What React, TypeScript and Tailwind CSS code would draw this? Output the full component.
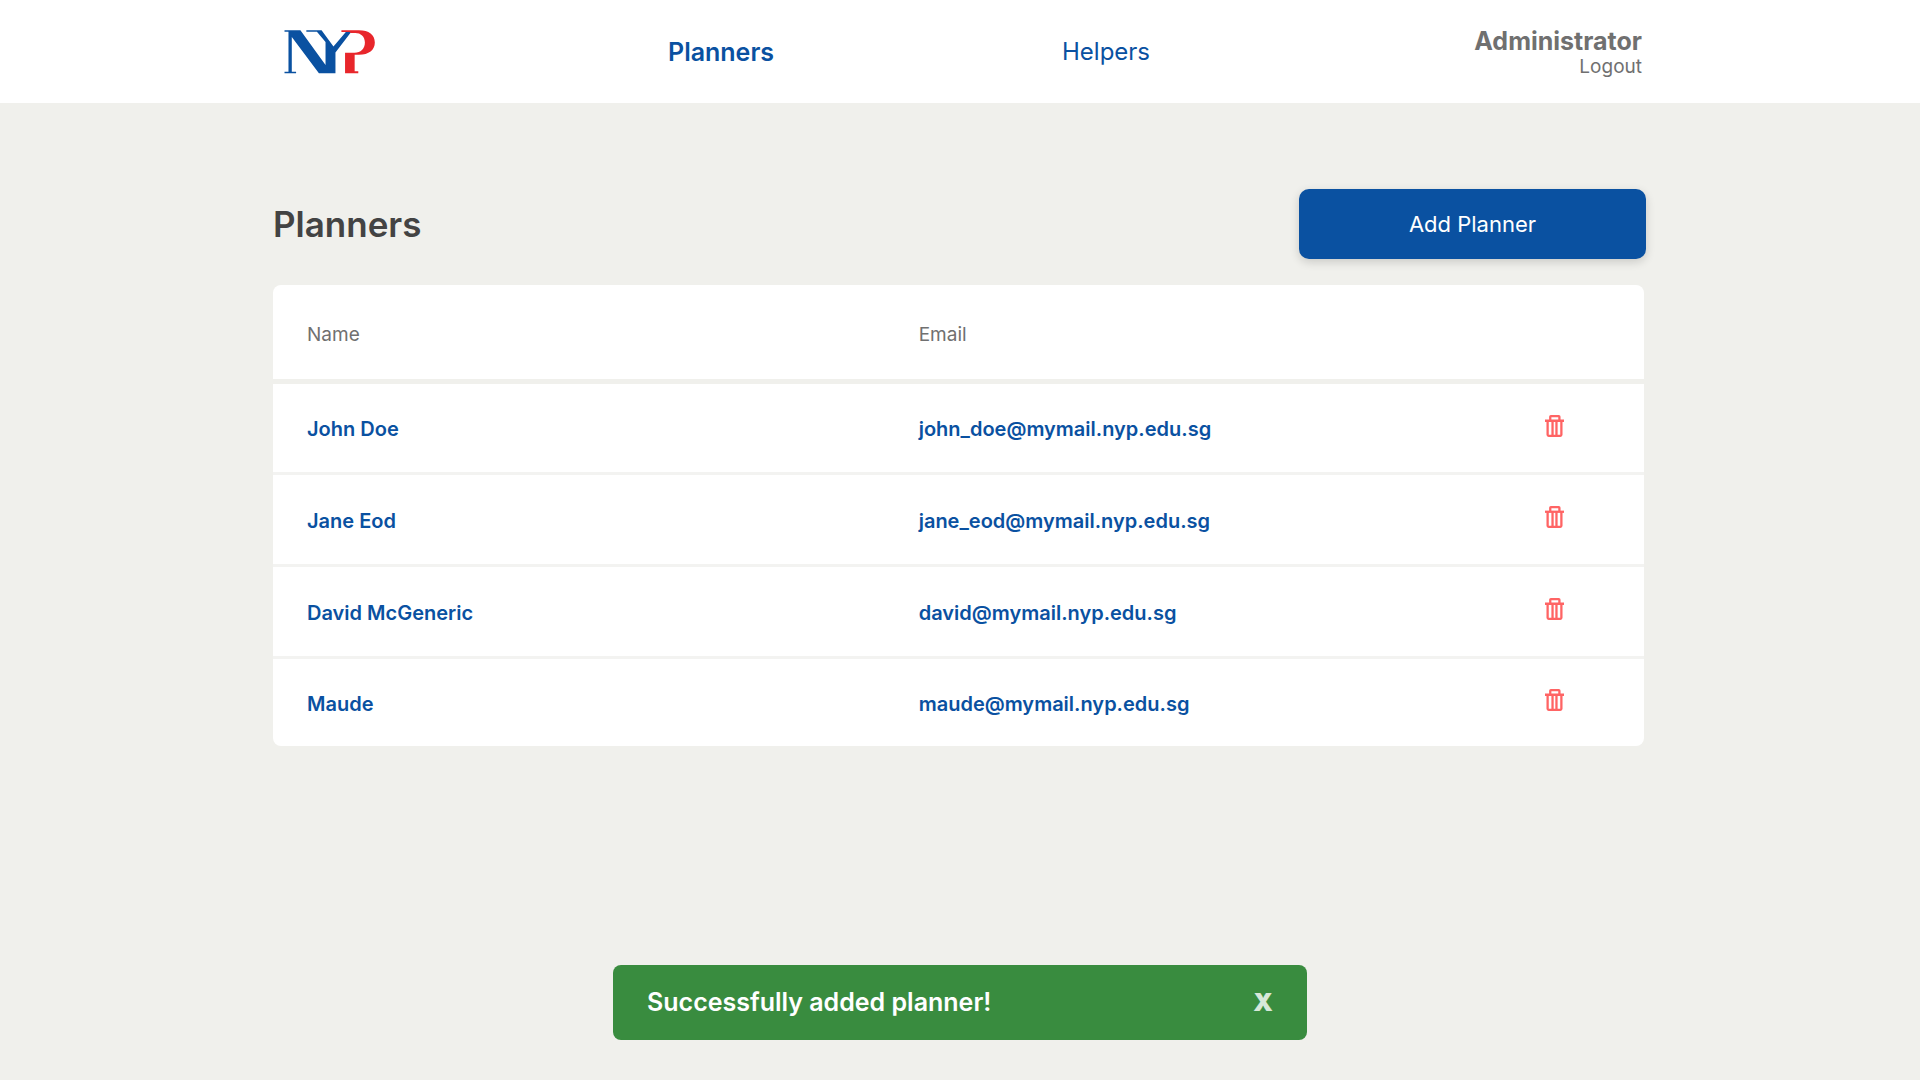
import { useState } from "react";

type Planner = { name: string; email: string };

const initialPlanners: Planner[] = [
  { name: "John Doe", email: "john_doe@mymail.nyp.edu.sg" },
  { name: "Jane Eod", email: "jane_eod@mymail.nyp.edu.sg" },
  { name: "David McGeneric", email: "david@mymail.nyp.edu.sg" },
  { name: "Maude", email: "maude@mymail.nyp.edu.sg" },
];

function Logo() {
  return (
    <svg viewBox="60 57 275 133" className="h-11 w-[92px]" role="img" aria-label="NYP">
      <g fill="#0a51a1">
        <path d="M60 58H108L184 163V93L158 62H126V58H172L208 107L246 62H262L214 125V188H164L82 78V183H95V188H60V183H72V62H60Z" />
      </g>
      <path
        fill="#e8262b"
        d="M232 58H285C315 58 333 72 333 95C333 118 315 132 285 132H272V182H283V188H243V126H272C290 126 303 114 303 95C303 76 290 66 274 66H257L260 63H232Z"
      />
    </svg>
  );
}

function TrashIcon() {
  return (
    <svg viewBox="133 75 58 66" className="h-[22px] w-[19px]" fill="none" stroke="#ff6464" strokeWidth="7" aria-hidden="true">
      <path d="M133 92H191" />
      <path d="M149 91V80Q149 78 151 78H175Q177 78 177 80V91" />
      <path d="M141 92V135Q141 138 144 138H180Q183 138 183 135V92" />
      <path d="M156 93V137M168 93V137" />
    </svg>
  );
}

export default function App() {
  const [planners, setPlanners] = useState(initialPlanners);
  const [toastOpen, setToastOpen] = useState(true);

  return (
    <div className="min-h-screen bg-[#f0f0ec] font-['Inter',sans-serif] text-[#0a51a1]">
      <header className="bg-white">
        <div className="mx-auto grid h-[103px] max-w-[1374px] grid-cols-[395fr_394fr_292fr_293fr] items-center">
          <a href="#home" className="ml-[11px] w-fit">
            <Logo />
          </a>
          <a href="#planners" aria-current="page" className="w-fit text-[25px] leading-8 font-semibold">
            Planners
          </a>
          <a href="#helpers" className="w-fit text-[24px] leading-8">
            Helpers
          </a>
          <div className="mr-[5px] flex flex-col items-end pt-0.5 text-[#707070]">
            <span className="text-[25px] leading-7 font-bold">Administrator</span>
            <a href="#logout" className="text-[19px] leading-6">
              Logout
            </a>
          </div>
        </div>
      </header>

      <main className="mx-auto max-w-[1374px] pt-[86px]">
        <div className="flex items-center justify-between pr-px">
          <h1 className="text-[35px] leading-10 font-semibold text-[#434343]">Planners</h1>
          <button
            type="button"
            className="h-[70px] w-[347px] rounded-[10px] bg-[#0a51a1] text-[22px] text-white shadow-[0_3px_10px_rgba(0,0,0,0.16)]"
          >
            Add Planner
          </button>
        </div>

        <div className="mt-[26px] mr-[3px] overflow-hidden rounded-lg bg-white">
          <table className="w-full table-fixed border-collapse text-left">
            <colgroup>
              <col className="w-[46%]" />
              <col className="w-[44%]" />
              <col />
            </colgroup>
            <thead>
              <tr className="h-24 border-b-5 border-[#f0f0ec] text-[19px] text-[#707070]">
                <th scope="col" className="pt-1.5 pl-[34px] font-normal">Name</th>
                <th scope="col" className="pt-1.5 pl-[15px] font-normal">Email</th>
                <td />
              </tr>
            </thead>
            <tbody className="text-[20px] font-semibold">
              {planners.map((planner) => (
                <tr key={planner.email} className="h-[92px] border-b-3 border-[#f3f3f1] last:h-[89px] last:border-0">
                  <td className="pt-[3px] pl-[34px]">{planner.name}</td>
                  <td className="pt-[3px] pl-[15px]">{planner.email}</td>
                  <td className="pb-1 pl-[38px]">
                    <button
                      type="button"
                      className="block"
                      aria-label={`Delete ${planner.name}`}
                      onClick={() => setPlanners(planners.filter((p) => p !== planner))}
                    >
                      <TrashIcon />
                    </button>
                  </td>
                </tr>
              ))}
            </tbody>
          </table>
        </div>
      </main>

      {toastOpen && (
        <div
          role="status"
          className="fixed inset-x-0 bottom-10 mx-auto flex h-[75px] w-full max-w-[694px] items-center justify-between rounded-lg bg-[#398c3f] px-[34px] text-[25px] font-semibold text-white"
        >
          <span>Successfully added planner!</span>
          <button type="button" aria-label="Close" className="font-black text-white/80" onClick={() => setToastOpen(false)}>
            X
          </button>
        </div>
      )}
    </div>
  );
}
